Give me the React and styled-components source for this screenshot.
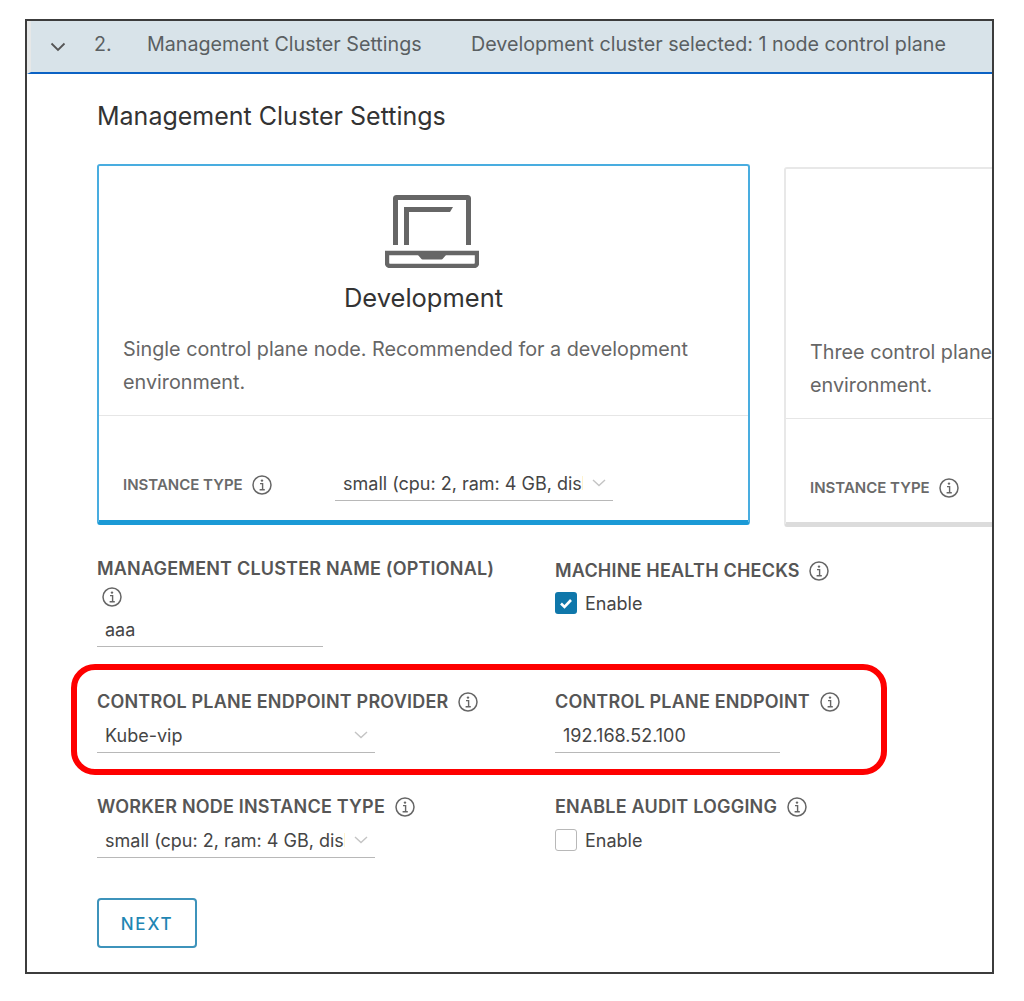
import React from "react"
import styled, { createGlobalStyle } from "styled-components"

const small = "small (cpu: 2, ram: 4 GB, disk: 20 GB)"

const Info = () => (
  <InfoSvg viewBox="0 0 20 20">
    <circle cx="10" cy="10" r="9" fill="none" stroke="#666" strokeWidth="1.5" />
    <circle cx="10" cy="5.6" r="1.2" fill="#666" />
    <path d="M8 8.6h2.6v6M7.6 14.8h5.2" fill="none" stroke="#666" strokeWidth="1.4" />
  </InfoSvg>
)

const Chevron = () => (
  <ChevronSvg viewBox="0 0 14 8">
    <path d="M1 1l6 5.5L13 1" fill="none" stroke="#c4c4c4" strokeWidth="1.4" />
  </ChevronSvg>
)

const Laptop = () => (
  <LaptopSvg viewBox="0 0 94 73">
    <path d="M10.5 50V3.5a1 1 0 0 1 1-1h71a1 1 0 0 1 1 1V50" fill="none" stroke="#666" strokeWidth="5" />
    <path d="M19 50V12h49l-3 5H24v33z" fill="#666" />
    <path d="M2 58h90v10a3 3 0 0 1-3 3H5a3 3 0 0 1-3-3z" fill="none" stroke="#666" strokeWidth="4.4" />
    <path d="M33 60h28l-3 3.5a2 2 0 0 1-2 1H38a2 2 0 0 1-2-1z" fill="#666" />
  </LaptopSvg>
)

const Plan = ({ selected, title, text }) => (
  <Card $selected={selected}>
    <CardTop>
      <Laptop />
      <CardTitle>{title}</CardTitle>
      <CardText>{text}</CardText>
    </CardTop>
    <CardFooter>
      <CardLabel>INSTANCE TYPE <Info /></CardLabel>
      <Select>
        <SelectValue>{small}</SelectValue>
        <Chevron />
      </Select>
    </CardFooter>
  </Card>
)

export default function App() {
  return (
    <Page>
      <GlobalStyle />
      <Frame>
        <Header>
          <HeaderChevron viewBox="0 0 16 10">
            <path d="M1.5 1.5L8 8l6.5-6.5" fill="none" stroke="#555" strokeWidth="1.8" />
          </HeaderChevron>
          <Step>2.</Step>
          <StepTitle>Management Cluster Settings</StepTitle>
          <span>Development cluster selected: 1 node control plane</span>
        </Header>
        <Body>
          <Heading>Management Cluster Settings</Heading>
          <Cards>
            <Plan
              selected
              title="Development"
              text="Single control plane node. Recommended for a development environment."
            />
            <Plan
              title="Production"
              text="Three control plane nodes. Recommended for a production environment."
            />
          </Cards>
          <FirstRow>
            <NarrowField>
              <Label>MANAGEMENT CLUSTER NAME (OPTIONAL) <Info /></Label>
              <Input $width={226}>aaa</Input>
            </NarrowField>
            <ShiftedField>
              <Label>MACHINE HEALTH CHECKS <Info /></Label>
              <Check>
                <Box $checked>
                  <svg viewBox="0 0 22 22" width="22" height="22">
                    <path d="M6 11.5l3.5 3.5L16 8" fill="none" stroke="#fff" strokeWidth="2.6" />
                  </svg>
                </Box>
                Enable
              </Check>
            </ShiftedField>
          </FirstRow>
          <Highlight>
            <div>
              <Label>CONTROL PLANE ENDPOINT PROVIDER <Info /></Label>
              <Select $gap>
                <SelectValue>Kube-vip</SelectValue>
                <Chevron />
              </Select>
            </div>
            <div>
              <Label>CONTROL PLANE ENDPOINT <Info /></Label>
              <Input $width={225} $gap>192.168.52.100</Input>
            </div>
          </Highlight>
          <LastRow>
            <div>
              <Label>WORKER NODE INSTANCE TYPE <Info /></Label>
              <Select $gap>
                <SelectValue>{small}</SelectValue>
                <Chevron />
              </Select>
            </div>
            <div>
              <Label>ENABLE AUDIT LOGGING <Info /></Label>
              <Check $low>
                <Box />
                Enable
              </Check>
            </div>
          </LastRow>
          <NextButton>NEXT</NextButton>
        </Body>
      </Frame>
    </Page>
  )
}

const GlobalStyle = createGlobalStyle`
  html, body {
    margin: 0;
    background: #fff;
  }
  body {
    font-family: Inter, "Liberation Sans", sans-serif;
    color: #565656;
  }
  * {
    box-sizing: border-box;
  }
`

const Page = styled.div`
  width: 1024px;
  height: 1001px;
  padding: 19px 0 0 25px;
`

const Frame = styled.div`
  width: 969px;
  height: 955px;
  border: 2px solid #3c3c3c;
  overflow: hidden;
`

const Header = styled.div`
  display: flex;
  align-items: center;
  height: 53px;
  padding-left: 19px;
  padding-bottom: 5px;
  background: #d8e3e9;
  border-left: 4px solid #e6e8e8;
  border-bottom: 2px solid #0b62c4;
  font-size: 19.7px;
  color: #5a5f62;
  white-space: nowrap;
`

const HeaderChevron = styled.svg`
  width: 16px;
  height: 10px;
  margin-top: 5px;
  flex: none;
`

const Step = styled.span`
  margin-left: 28px;
  width: 53px;
`

const StepTitle = styled.span`
  width: 324px;
`

const Body = styled.div`
  padding-left: 70px;
`

const Heading = styled.h2`
  margin: 26px 0 32px;
  font-size: 25px;
  line-height: 32px;
  font-weight: 400;
  color: #333;
`

const Cards = styled.div`
  display: flex;
  align-items: flex-start;
  gap: 34px;
`

const Card = styled.div`
  flex: none;
  width: 653px;
  height: ${(p) => (p.$selected ? "361px" : "360px")};
  margin-top: ${(p) => (p.$selected ? "0" : "3px")};
  border: 2px solid ${(p) => (p.$selected ? "#49ade0" : "#e8e8e8")};
  border-bottom: 5px solid ${(p) => (p.$selected ? "#1b9ad6" : "#dcdcdc")};
  border-radius: 3px;
  background: #fff;
`

const CardTop = styled.div`
  height: 250px;
  padding: 29px 24px 0;
  border-bottom: 1px solid #e6e6e6;
  text-align: center;
`

const LaptopSvg = styled.svg`
  display: block;
  width: 94px;
  height: 73px;
  margin: 0 0 14px 262px;
`

const CardTitle = styled.div`
  font-size: 25.5px;
  line-height: 32px;
  color: #333;
`

const CardText = styled.p`
  margin: 19px 0 0;
  font-size: 19.8px;
  line-height: 33px;
  text-align: left;
  color: #666;
`

const CardFooter = styled.div`
  display: grid;
  grid-template-columns: 212px 278px;
  align-items: end;
  padding: 49px 0 0 24px;
`

const CardLabel = styled.div`
  display: flex;
  align-items: center;
  gap: 4px;
  height: 36px;
  padding-top: 3px;
  font-size: 15px;
  font-weight: 600;
  color: #6a6a6a;
`

const InfoSvg = styled.svg`
  display: inline-block;
  width: 20px;
  height: 20px;
  flex: none;
  vertical-align: -4px;
  margin-left: 5px;
`

const Label = styled.div`
  margin-bottom: -1px;
  padding-top: 1px;
  font-size: 18px;
  line-height: 28px;
  font-weight: 600;
  letter-spacing: 0.2px;
  color: #565656;
`

const Select = styled.div`
  display: flex;
  align-items: center;
  justify-content: space-between;
  width: 278px;
  height: 36px;
  margin-top: ${(p) => (p.$gap ? "2px" : "0")};
  padding: 1px 7px 0 8px;
  border-bottom: 1px solid #b8b8b8;
  font-size: 18px;
  color: #454545;
`

const SelectValue = styled.span`
  width: 240px;
  overflow: hidden;
  white-space: nowrap;
`

const ChevronSvg = styled.svg`
  width: 14px;
  height: 8px;
  flex: none;
`

const Input = styled.div`
  display: flex;
  align-items: center;
  width: ${(p) => p.$width}px;
  height: 36px;
  margin-top: ${(p) => (p.$gap ? "2px" : "1px")};
  padding: 1px 8px 0;
  border-bottom: 1px solid #b8b8b8;
  font-size: 18px;
  color: #454545;
`

const FirstRow = styled.div`
  display: grid;
  grid-template-columns: 458px 1fr;
  margin-top: 27px;
`

const NarrowField = styled.div`
  width: 405px;
`

const ShiftedField = styled.div`
  padding-top: 2px;
`

const Highlight = styled.div`
  display: grid;
  grid-template-columns: 458px 1fr;
  width: 816px;
  height: 111px;
  margin: 17px 0 0 -26px;
  padding: 17px 0 0 20px;
  border: 6px solid #fe0000;
  border-radius: 24px;
`

const LastRow = styled.div`
  display: grid;
  grid-template-columns: 458px 1fr;
  margin-top: 17px;
`

const Check = styled.div`
  display: flex;
  align-items: center;
  gap: 8px;
  margin-top: ${(p) => (p.$low ? "9px" : "8px")};
  font-size: 18px;
  color: #454545;
`

const Box = styled.span`
  display: block;
  width: 22px;
  height: 22px;
  border-radius: 3px;
  background: ${(p) => (p.$checked ? "#0f77aa" : "#fff")};
  border: ${(p) => (p.$checked ? "none" : "1px solid #b8b8b8")};
`

const NextButton = styled.button`
  display: block;
  width: 100px;
  height: 50px;
  margin-top: 40px;
  padding: 2px 0 0;
  background: #fff;
  border: 2px solid #3d93bb;
  border-radius: 4px;
  font-family: inherit;
  font-size: 17px;
  font-weight: 500;
  letter-spacing: 1.8px;
  color: #1f86b3;
`
